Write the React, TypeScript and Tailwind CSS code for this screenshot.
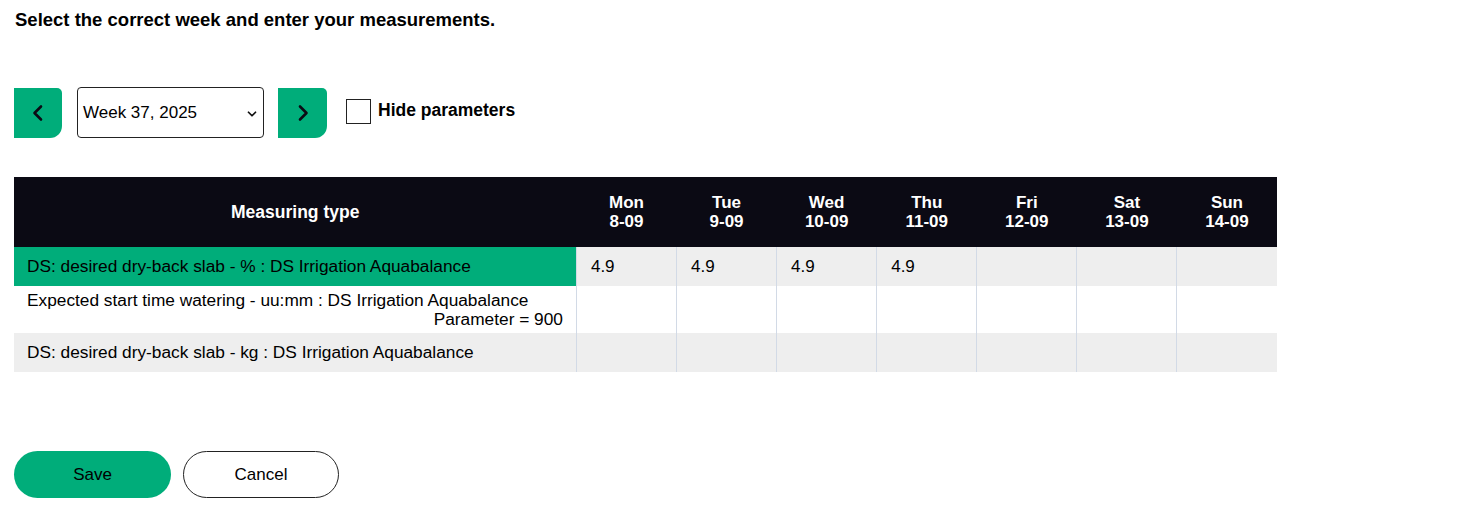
import React, { useState } from 'react';

const days = [
  { day: 'Mon', date: '8-09' },
  { day: 'Tue', date: '9-09' },
  { day: 'Wed', date: '10-09' },
  { day: 'Thu', date: '11-09' },
  { day: 'Fri', date: '12-09' },
  { day: 'Sat', date: '13-09' },
  { day: 'Sun', date: '14-09' },
];

const rows = [
  { label: 'DS: desired dry-back slab - % : DS Irrigation Aquabalance', param: '', active: true, values: ['4.9', '4.9', '4.9', '4.9', '', '', ''] },
  { label: 'Expected start time watering - uu:mm : DS Irrigation Aquabalance', param: 'Parameter = 900', active: false, values: ['', '', '', '', '', '', ''] },
  { label: 'DS: desired dry-back slab - kg : DS Irrigation Aquabalance', param: '', active: false, values: ['', '', '', '', '', '', ''] },
];

const App: React.FC = () => {
  const [hideParams, setHideParams] = useState(false);

  return (
    <div className="min-h-screen bg-white px-[14px] pt-[10px] text-black" style={{ fontFamily: '"Liberation Sans", Arial, sans-serif' }}>
      <h1 className="text-[18.5px] font-bold leading-[20px] ml-px">Select the correct week and enter your measurements.</h1>

      {/* Week picker */}
      <div className="flex items-center mt-[57px] h-[51px]">
        <button className="w-[48px] h-[50px] bg-[#00ad7a] rounded-tr-[5px] rounded-br-[12px] flex items-center justify-center" aria-label="Previous week">
          <svg viewBox="0 0 24 24" className="w-[24px] h-[24px]" fill="none" stroke="#0b0a14" strokeWidth={2.6} strokeLinecap="round" strokeLinejoin="round"><path d="M15 5.5L8.5 12l6.5 6.5" /></svg>
        </button>
        <div className="relative ml-[15px] w-[187px] h-[51px] border border-[#222] rounded-[4px] flex items-center pl-[5px]">
          <span className="text-[17px]">Week 37, 2025</span>
          <svg viewBox="0 0 24 24" className="absolute right-[4px] top-[19px] w-[14px] h-[14px]" fill="none" stroke="#111" strokeWidth={3} strokeLinecap="round" strokeLinejoin="round"><path d="M6 9l6 6 6-6" /></svg>
        </div>
        <button className="ml-[14px] w-[49px] h-[50px] bg-[#00ad7a] rounded-tr-[5px] rounded-br-[12px] flex items-center justify-center" aria-label="Next week">
          <svg viewBox="0 0 24 24" className="w-[24px] h-[24px]" fill="none" stroke="#0b0a14" strokeWidth={2.6} strokeLinecap="round" strokeLinejoin="round"><path d="M9 5.5l6.5 6.5L9 18.5" /></svg>
        </button>
        <label className="ml-[19px] flex items-center gap-[7px] cursor-pointer self-start mt-[12px]">
          <input type="checkbox" checked={hideParams} onChange={() => setHideParams(!hideParams)} className="appearance-none w-[25px] h-[25px] border border-[#222] bg-white" />
          <span className="text-[17.5px] font-bold -mt-[2px]">Hide parameters</span>
        </label>
      </div>

      {/* Measurements table */}
      <table className="mt-[39px] border-collapse w-[1263px] table-fixed">
        <thead>
          <tr className="bg-[#0b0a14] text-white h-[70px]">
            <th className="w-[562px] text-[17.5px] font-bold">Measuring type</th>
            {days.map((d) => (
              <th key={d.day} className="w-[100px] text-[17px] font-bold leading-[19px]">
                {d.day}<br />{d.date}
              </th>
            ))}
          </tr>
        </thead>
        <tbody>
          {rows.map((r, i) => (
            <tr key={i} className={`${i % 2 === 0 ? 'bg-[#eeeeee]' : 'bg-white'} ${r.param ? 'h-[47px]' : 'h-[39px]'}`}>
              <td className={`px-[13px] text-[17.3px] leading-[19px] ${r.active ? 'bg-[#00ad7a]' : ''}`}>
                <div>{r.label}</div>
                {r.param && !hideParams && <div className="text-right">{r.param}</div>}
              </td>
              {r.values.map((v, j) => (
                <td key={j} className="border-l border-[#d2dae6] px-[14px] text-[17px]">{v}</td>
              ))}
            </tr>
          ))}
        </tbody>
      </table>

      {/* Actions */}
      <div className="flex gap-[12px] mt-[79px]">
        <button className="w-[157px] h-[47px] rounded-full bg-[#00ad7a] text-[17px]">Save</button>
        <button className="w-[156px] h-[47px] rounded-full border border-[#222] bg-white text-[17px]">Cancel</button>
      </div>
    </div>
  );
};

export default App;
